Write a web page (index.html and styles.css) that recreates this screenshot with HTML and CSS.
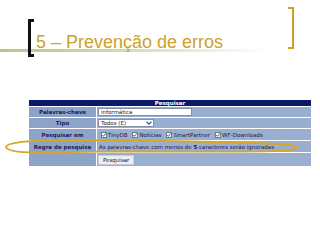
FILE: index.html
```html
<!DOCTYPE html>
<html lang="pt">
<head>
<meta charset="utf-8">
<link rel="stylesheet" href="styles.css">
</head>
<body>
<div class="slide">
  <header class="head">
    <h1 class="title">5 – Prevenção de erros</h1>
  </header>
  <div class="panel">
    <div class="cap">Pesquisar</div>
    <div class="lbl">Palavras-chave</div>
    <div class="val"><span class="field input">informática</span></div>
    <div class="lbl">Tipo</div>
    <div class="val"><span class="field select">Todos (E)<svg class="chev" width="6" height="4" viewBox="0 0 6 4"><path d="M0.5 0.8 L3 3.2 L5.5 0.8" fill="none" stroke="#3a5aa8" stroke-width="1.2"/></svg></span></div>
    <div class="lbl">Pesquisar em</div>
    <div class="val checks">
      <span class="chk"><svg class="box" width="6" height="6" viewBox="0 0 6 6"><rect x="0.5" y="0.5" width="5" height="5" fill="#fff" stroke="#6b7a8c"/><path d="M1.3 3 L2.5 4.3 L4.8 1.4" fill="none" stroke="#1d7a2a" stroke-width="1"/></svg>TinyDB</span>
      <span class="chk"><svg class="box" width="6" height="6" viewBox="0 0 6 6"><rect x="0.5" y="0.5" width="5" height="5" fill="#fff" stroke="#6b7a8c"/><path d="M1.3 3 L2.5 4.3 L4.8 1.4" fill="none" stroke="#1d7a2a" stroke-width="1"/></svg>Notícias</span>
      <span class="chk"><svg class="box" width="6" height="6" viewBox="0 0 6 6"><rect x="0.5" y="0.5" width="5" height="5" fill="#fff" stroke="#6b7a8c"/><path d="M1.3 3 L2.5 4.3 L4.8 1.4" fill="none" stroke="#1d7a2a" stroke-width="1"/></svg>SmartPartner</span>
      <span class="chk"><svg class="box" width="6" height="6" viewBox="0 0 6 6"><rect x="0.5" y="0.5" width="5" height="5" fill="#fff" stroke="#6b7a8c"/><path d="M1.3 3 L2.5 4.3 L4.8 1.4" fill="none" stroke="#1d7a2a" stroke-width="1"/></svg>WF-Downloads</span>
    </div>
    <div class="lbl">Regra de pesquisa</div>
    <div class="val"><span class="rule">As palavras-chave com menos de <b>5</b> caracteres serão ignoradas</span></div>
    <div class="lbl"></div>
    <div class="val"><span class="btn">Pesquisar</span></div>
  </div>
  <svg class="mark" width="320" height="240" viewBox="0 0 320 240">
    <path d="M6 147 C8 141 40 139.8 90 140.3 C160 141 250 141.5 289 144.8 C300 146 299 149.5 285 150.6 C240 152.8 160 151 100 151.6 C40 152.3 9 154.5 6 147 Z" fill="none" stroke="#d6a624" stroke-width="1.8"/>
  </svg>
</div>
</body>
</html>
```
FILE: styles.css
```css
html, body {
  margin: 0;
  padding: 0;
  background: #fff;
}
.slide {
  position: relative;
  width: 320px;
  height: 240px;
  overflow: hidden;
}
.head {
  position: relative;
  height: 52px;
  margin-bottom: 48px;
}
.head::before {
  content: "";
  position: absolute;
  left: 0;
  top: 49px;
  width: 270px;
  height: 3px;
  background: linear-gradient(to right, #c4c088 0%, #d6d4a8 40%, rgba(255,255,255,0) 100%);
}
.head::after {
  content: "";
  position: absolute;
  left: 288px;
  top: 7px;
  width: 4px;
  height: 38px;
  border: 2.5px solid #cf9f22;
  border-left: none;
}
.title {
  position: relative;
  margin: 0;
  padding: 32px 0 0 36px;
  font: 400 18px/20px "Liberation Sans", Arial, sans-serif;
  color: #cda12e;
}
.title::before {
  content: "";
  position: absolute;
  left: 28px;
  top: 19px;
  width: 3px;
  height: 32px;
  border: 3px solid #111;
  border-right: none;
}
.panel {
  margin-left: 29px;
  width: 282px;
  display: grid;
  grid-template-columns: 67px 1fr;
  grid-template-rows: 6px 10px 10px 11px 11px 13px;
  gap: 1px;
  font-family: "DejaVu Sans", Verdana, sans-serif;
  font-size: 5.5px;
}
.cap {
  grid-column: 1 / -1;
  background: #0c1868;
  color: #fff;
  font-weight: bold;
  text-align: center;
  line-height: 6px;
}
.lbl {
  background: #8da3c8;
  color: #17215a;
  font-weight: bold;
  display: flex;
  align-items: center;
  justify-content: center;
}
.val {
  background: #9aaed0;
  color: #1a2040;
  display: flex;
  align-items: center;
  padding-left: 1px;
}
.field {
  background: #fff;
  box-sizing: border-box;
  height: 8px;
  border: 1px solid #8390a8;
  display: flex;
  align-items: center;
  padding-left: 2px;
  color: #222;
}
.input { width: 94px; }
.select {
  width: 56px;
  justify-content: space-between;
  padding-right: 1px;
}
.chev { display: block; }
.chk {
  display: flex;
  align-items: center;
  margin-right: 2px;
}
.chk .box { display: block; margin: 0 1px 0 3px; }
.rule { padding-left: 1px; }
.rule b { font-weight: bold; }
.btn {
  background: #eceef2;
  border: 1px solid #c8ccd6;
  height: 8px;
  line-height: 8px;
  padding: 0 4px;
  color: #222;
  margin-top: 1px;
}
.mark {
  position: absolute;
  left: 0;
  top: 0;
  pointer-events: none;
}
```
